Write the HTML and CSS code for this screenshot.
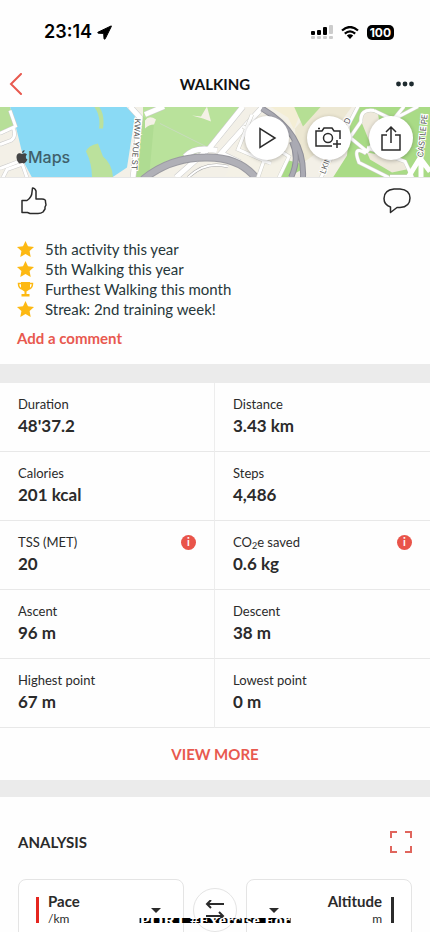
FILE: index.html
```html
<!DOCTYPE html>
<html lang="en">
<head>
<meta charset="utf-8">
<meta name="viewport" content="width=device-width, initial-scale=1">
<title>Walking</title>
<link rel="stylesheet" href="styles.css">
</head>
<body>
<div class="app">
  <div class="status">
    <div class="status-time">23:14
      <svg width="15" height="15" viewBox="0 0 15 15"><path d="M14 1 1 7.200Q.3 8 1.300 8.200L6.700 8.400 7 13.600Q7.400 14.800 8.200 13.800L14.300 1.500Q14.600.6 14 1Z" stroke="#000"/></svg>
    </div>
    <div class="status-icons">
      <svg width="22" height="14" viewBox="0 0 22 14"><g fill="#000"><rect y="6" width="4" height="4" rx="1"/><rect x="6" y="5" width="4" height="5" rx="1"/><rect x="12" y="2" width="4" height="8" rx="1"/></g><g fill="#ccc"><rect x="18" width="4" height="9" rx="1"/><rect y="11" width="4" height="3" rx="1"/><rect x="6" y="11" width="4" height="3" rx="1"/><rect x="12" y="11" width="4" height="3" rx="1"/><rect x="18" y="11" width="4" height="3" rx="1"/></g></svg>
      <svg width="18" height="13" viewBox="0 0 18 13"><path d="M1 4.500Q9-2.500 17 4.500M3.800 7.600Q9 3 14.200 7.600" fill="none" stroke="#000" stroke-width="2.200"/><path d="M5.800 9.600Q9 7 12.200 9.600L9 13Z"/></svg>
      <span class="battery">100</span>
    </div>
  </div>

  <header class="nav">
    <button class="icon-btn" aria-label="Back"><svg width="14" height="22" viewBox="0 0 14 22"><path d="M12 1 2 11 12 21" fill="none" stroke="#e8594f" stroke-width="2" stroke-linecap="round"/></svg></button>
    <h1>WALKING</h1>
    <button class="icon-btn" aria-label="More"><svg width="20" height="6" viewBox="0 0 20 6" fill="#1e2b2f"><circle cx="3.500" cy="3" r="2.400"/><circle cx="10" cy="3" r="2.400"/><circle cx="16.500" cy="3" r="2.400"/></svg></button>
  </header>

  <div class="map">
    <svg class="map-art" viewBox="0 0 430 71" preserveAspectRatio="xMidYMid slice">
      <rect width="430" height="71" fill="#f3f0e7"/>
      <path d="M0 0H10L15 20 0 27Z" fill="#b7df98"/>
      <path d="M10 0H126L135 9 127 61 112 71H32L25 58 17 25Z" fill="#8adaf5"/>
      <path d="M0 27 13 21Q17 30 11 34L0 38M0 62 21 54 27 71M3 71 7 63 21 58M10 4 16 21" fill="none" stroke="#ccc" stroke-width="4"/>
      <path d="M0 27 13 21Q17 30 11 34L0 38M0 62 21 54 27 71M3 71 7 63 21 58M10 4 16 21" fill="none" stroke="#fff" stroke-width="3"/>
      <path d="M94 0Q101 9 99 22H103Q105 8 99 0ZM86 45Q88 39 98 37L103 50Q112 57 113 71H92Q92 57 86 45Z" fill="#bbe19c"/>
      <path d="M143 0H243L206 44Q166 55 147 71H136L143 10Z" fill="#b9e29b"/>
      <path d="M154 17 149 71H136L143 10Z" fill="#afdc92"/>
      <path d="M145 14Q149 8 156 13L154 18Q149 18 145 22ZM192 9 201 10 207 0 211 15 203 12ZM225 70 258 5 320 0 290 71Z" fill="#f4f1e6"/>
      <path d="M257 0H321L350 0 334 13 303 0 294 23 288 11 270 0Z" fill="#f4eed5"/>
      <path d="M314 0H352L320 44 298 60 295 22Z" fill="#ece7d2"/>
      <path d="M294 0H321L303 20Z" fill="#b5df94"/>
      <path d="M351 11 360 0H430V71H333L347 49Z" fill="#a9db86"/>
      <path d="M289 54 300 57 304 62 287 71H278Z" fill="#a9db86"/>
      <path d="M360 12Q365 2 378 7L383 40 369 34ZM367 46 401 52 411 62 392 66 370 53Z" fill="#eee9db"/>
      <path d="M160 17 206 40" stroke="#c8dcbd" fill="none"/>
      <g fill="none" stroke="#ccc" stroke-width="6"><path d="M130 0 140 11 133 71M145 8 164 0M176 71 210 41 243 0M185 50Q195 39 217 44M263 0 221 47 240 56"/></g>
      <g fill="none" stroke="#fff" stroke-width="5"><path d="M130 0 140 11 133 71M145 8 164 0M176 71 210 41 243 0M185 50Q195 39 217 44M263 0 221 47 240 56"/></g>
      <path d="M143 73Q170 51 205 51Q240 50 257 73" fill="none" stroke="#9a9aa1" stroke-width="8"/>
      <path d="M143 73Q170 51 205 51Q240 50 257 73" fill="none" stroke="#b0b0b7" stroke-width="6"/>
      <path d="M188 71Q205 54 228 60" fill="none" stroke="#aaa" stroke-width="3"/><path d="M188 71Q205 54 228 60" fill="none" stroke="#fff" stroke-width="2"/>
      <path d="M262 2Q305 27 303 71M292 35Q300 52 291 71" fill="none" stroke="#909099" stroke-width="6"/>
      <path d="M262 2Q305 27 303 71M292 35Q300 52 291 71" fill="none" stroke="#aaaab3" stroke-width="4"/>
      <path d="M243 20 289 50 279 71M252 8 238 43 271 57M265 51 258 71M358 0 321 71M404 0 367 45 350 31 361 15Q360 2 374 4M374 4 393 13 418 0M366 47Q352 38 359 56L389 71M367 41 405 55 412 70H390" fill="none" stroke="#d0d0c9" stroke-width="4"/>
      <path d="M243 20 289 50 279 71M252 8 238 43 271 57M265 51 258 71M358 0 321 71M404 0 367 45 350 31 361 15Q360 2 374 4M374 4 393 13 418 0M366 47Q352 38 359 56L389 71M367 41 405 55 412 70H390" fill="none" stroke="#fff" stroke-width="3"/>
      <path d="M421 50V71M421 50 408 71M421 53 430 65" stroke="#fff" stroke-width="5" fill="none"/>
      <g class="street"><text transform="translate(135 12) rotate(94)">KWAI YUE ST</text><text transform="translate(325 68) rotate(-69)">LKIN</text><text transform="translate(349 18) rotate(-70)">D</text><text transform="translate(423 51) rotate(-84)">CASTLE PE</text></g>
    </svg>
    <div class="map-brand"><svg width="12" height="14" viewBox="0 0 12 14"><path d="M6 4Q4.800 3 3 3.300Q.3 4 .5 7.500Q1 12 3.500 13.400Q5 13 6.300 12.900L8 13.400Q10 13 11.500 9.600Q9.600 8.500 9.800 6.700Q9.900 5.300 11 4.600Q8.900 2.300 6 4ZM6 3Q6 .5 8.500 0Q8.700 2.500 6 3Z"/></svg>Maps</div>
    <div class="map-actions">
      <button class="round" aria-label="Play"><svg width="20" height="22" viewBox="0 0 20 22"><path d="M3 1.500V20.500L18 11Z"/></svg></button>
      <button class="round" aria-label="Add photo"><svg width="28" height="22" viewBox="0 0 28 22"><path d="M17 19H1V4H7L9 1H17L19 4H25V12M3 1.500H5M22 13V21M18 17H26"/><circle cx="13" cy="11" r="4.500"/></svg></button>
      <button class="round" aria-label="Share"><svg width="20" height="27" viewBox="0 0 20 27"><path d="M6 10H1V25H19V10H14M10 18V2M5 7 10 2 15 7"/></svg></button>
    </div>
  </div>

  <section class="social">
    <div class="reactions">
      <button class="icon-btn" aria-label="Like"><svg width="26" height="28" viewBox="0 0 26 28"><path d="M1 13.500H6Q11 10 11 5L11.500 1Q14 1 15 4V12H21Q25 12 24.500 15L25 18 24 20 24 22 22 25Q20 26.500 17 26.500H9L6.500 25.500H1Z"/></svg></button>
      <button class="icon-btn" aria-label="Comments"><svg width="28" height="26" viewBox="0 0 28 26"><path d="M7.500 19Q1 17 1 10.500Q1 2 11 1H17Q27 2 27 10Q27 19 17 19.500H14L7.500 24.500Z"/></svg></button>
    </div>
    <ul class="awards">
      <li><svg class="award" viewBox="0 0 17 16"><path d="M8.500 0 11 5.300 17 6 12.600 10 13.700 16 8.500 13 3.300 16 4.400 10 0 6 6 5.300Z"/></svg>5th activity this year</li>
      <li><svg class="award" viewBox="0 0 17 16"><path d="M8.500 0 11 5.300 17 6 12.600 10 13.700 16 8.500 13 3.300 16 4.400 10 0 6 6 5.300Z"/></svg>5th Walking this year</li>
      <li><svg class="award" viewBox="0 0 17 16"><path d="M4 1H13V7Q12 10 9.500 10.500V13H12.500V15.500H4.500V13H7.500V10.500Q5 10 4 7Z"/><path d="M4 2.500H1.500Q1.500 7 5 8M13 2.500H15.500Q15.500 7 12 8" fill="none" stroke="#fdb913" stroke-width="1.500"/></svg>Furthest Walking this month</li>
      <li><svg class="award" viewBox="0 0 17 16"><path d="M8.500 0 11 5.300 17 6 12.600 10 13.700 16 8.500 13 3.300 16 4.400 10 0 6 6 5.300Z"/></svg>Streak: 2nd training week!</li>
    </ul>
    <a class="add-comment" href="#comment">Add a comment</a>
  </section>

  <dl class="stats">
    <div class="stat"><dt>Duration</dt><dd>48'37.2</dd></div>
    <div class="stat"><dt>Distance</dt><dd>3.43 km</dd></div>
    <div class="stat"><dt>Calories</dt><dd>201 kcal</dd></div>
    <div class="stat"><dt>Steps</dt><dd>4,486</dd></div>
    <div class="stat"><dt>TSS (MET)<button class="info" aria-label="About TSS">i</button></dt><dd>20</dd></div>
    <div class="stat"><dt><span>CO<small>2</small>e saved</span><button class="info" aria-label="About CO2e saved">i</button></dt><dd>0.6 kg</dd></div>
    <div class="stat"><dt>Ascent</dt><dd>96 m</dd></div>
    <div class="stat"><dt>Descent</dt><dd>38 m</dd></div>
    <div class="stat"><dt>Highest point</dt><dd>67 m</dd></div>
    <div class="stat"><dt>Lowest point</dt><dd>0 m</dd></div>
  </dl>
  <button class="view-more">VIEW MORE</button>

  <section class="analysis">
    <div class="analysis-head">
      <h2>ANALYSIS</h2>
      <button class="icon-btn" aria-label="Full screen"><svg width="22" height="22" viewBox="0 0 22 22"><path d="M1 7V1H7M15 1H21V7M21 15V21H15M7 21H1V15" fill="none" stroke="#e0655d" stroke-width="2"/></svg></button>
    </div>
    <div class="axes">
      <button class="axis"><span class="bar"></span><span class="axis-text"><b>Pace</b><span>/km</span></span><span class="caret"></span></button>
      <button class="swap" aria-label="Swap axes"><svg width="20" height="20" viewBox="0 0 20 20"><path d="M19 4H2M6 0 2 4 6 8M1 16H18M14 12 18 16 14 20"/></svg></button>
      <button class="axis axis-right"><span class="bar"></span><span class="axis-text"><b>Altitude</b><span>m</span></span><span class="caret"></span></button>
    </div>
  </section>
  <div class="ticker"><span>PORT #Exercise For</span></div>
</div>
</body>
</html>
```
FILE: styles.css
```css
* { box-sizing: border-box; }
body {
  margin: 0;
  background: #fff;
  color: #2b2b2b;
  font-family: Lato, "Open Sans", sans-serif;
}
.app { position: relative; height: 100vh; overflow: hidden; background: #fefefe; }
button { margin: 0; padding: 0; border: 0; background: none; color: inherit; font: inherit; }
svg { display: block; flex: none; }
h1, h2, ul, dl, dd { margin: 0; padding: 0; }

.status { display: flex; justify-content: space-between; align-items: center; height: 64px; padding: 0 36px 0 44px; color: #000; }
.status-time { display: flex; align-items: center; gap: 5px; font: 600 18px/24px Inter, sans-serif; }
.status-icons { display: flex; align-items: center; gap: 8px; }
.battery { padding: 0 3px; border-radius: 5px; background: #000; color: #fff; font: 700 12px/15px Inter, sans-serif; }

.nav { display: grid; grid-template-columns: 1fr auto 1fr; align-items: center; height: 43px; padding: 0 16px 4px 9px; }
.nav { padding: 0 9px 4px; }
.nav h1 { color: #111; font-size: 15px; line-height: 20px; }
.nav .icon-btn:last-child { justify-self: end; padding-right: 6px; }

.map { position: relative; height: 71px; overflow: hidden; border-bottom: 1px solid #e6e6e6; }
.map-art { width: 100%; height: 100%; }
.street { fill: #555; stroke: #fff; stroke-width: 2px; paint-order: stroke; font: 8px Inter, sans-serif; }
.map-brand { position: absolute; left: 16px; bottom: 10px; display: flex; align-items: center; color: #40606a; font: 500 16px/20px Inter, sans-serif; }
.map-brand svg { fill: #444; }
.map-actions { position: absolute; top: 9px; right: 17px; display: flex; gap: 18px; }
.round { display: grid; place-items: center; width: 44px; height: 44px; border-radius: 50%; background: #fff; box-shadow: 0 1px 4px #0004; }
.round svg { fill: none; stroke: #2b2b2b; stroke-width: 1.5px; }

.social { height: 205px; padding: 9px 17px 0; border-bottom: 19px solid #ebebeb; }
.reactions { display: flex; justify-content: space-between; padding: 0 2px 0 4px; }
.reactions svg { fill: none; stroke: #2b2b2b; stroke-width: 1.5px; stroke-linejoin: round; }
.awards { padding-top: 24px; list-style: none; }
.awards li { display: flex; align-items: center; gap: 11px; color: #27373a; font-size: 15px; line-height: 20px; }
.award { width: 17px; height: 16px; fill: #fdb913; }
.add-comment { display: block; margin-top: 9px; color: #e8594f; font-size: 15px; font-weight: 700; line-height: 20px; text-decoration: none; }

.stats { display: grid; grid-template-columns: 1fr 1fr; }
.stat { height: 69px; padding: 11px 18px; border-bottom: 1px solid #e8e8e8; }
.stat:nth-child(odd) { border-right: 1px solid #ededed; }
.stat dt { display: flex; justify-content: space-between; align-items: center; font-size: 13px; line-height: 20px; }
.stat dd { font-size: 17px; font-weight: 700; line-height: 24px; }
.stat small { font-size: 9px; vertical-align: -2px; line-height: 1px; }
.info { width: 15px; height: 15px; border-radius: 50%; background: #e9544a; color: #fff; font-size: 11px; font-weight: 700; line-height: 14px; }
.view-more { display: block; width: 100%; height: 69px; border-bottom: 17px solid #ebebeb; color: #e8594f; font-size: 15px; font-weight: 700; }

.analysis { padding: 34px 18px 0; }
.analysis-head { display: flex; justify-content: space-between; align-items: center; height: 22px; }
.analysis h2 { font-size: 15px; line-height: 20px; }
.axes { display: flex; align-items: center; gap: 9px; padding-top: 26px; }
.axis { display: flex; align-items: center; flex: 1; gap: 9px; height: 62px; padding: 0 22px 0 17px; border: 1px solid #e4e4e4; border-radius: 8px; background: #fff; text-align: left; }
.axis-right { flex-direction: row-reverse; padding: 0 17px 0 22px; text-align: right; }
.axis-text { flex: 1; }
.axis-text b, .axis-text span { display: block; }
.axis-text b { font-size: 15px; line-height: 18px; }
.axis-text span { font-size: 12px; line-height: 18px; }
.bar { width: 3px; height: 26px; background: #e5261f; }
.axis-right .bar { background: #2b2b2b; }
.caret { border: 5px solid transparent; border-top-color: #2b2b2b; border-bottom: 0; }
.swap { display: grid; place-items: center; width: 44px; height: 44px; border: 1px solid #e4e4e4; border-radius: 50%; background: #fff; }
.swap svg { fill: none; stroke: #2b2b2b; stroke-width: 2px; }
.ticker { position: absolute; bottom: 9px; left: 50%; height: 5px; overflow: hidden; transform: translateX(-50%); background: #000; color: #fff; font: 700 17px/5px "Liberation Serif", serif; white-space: nowrap; }
```
